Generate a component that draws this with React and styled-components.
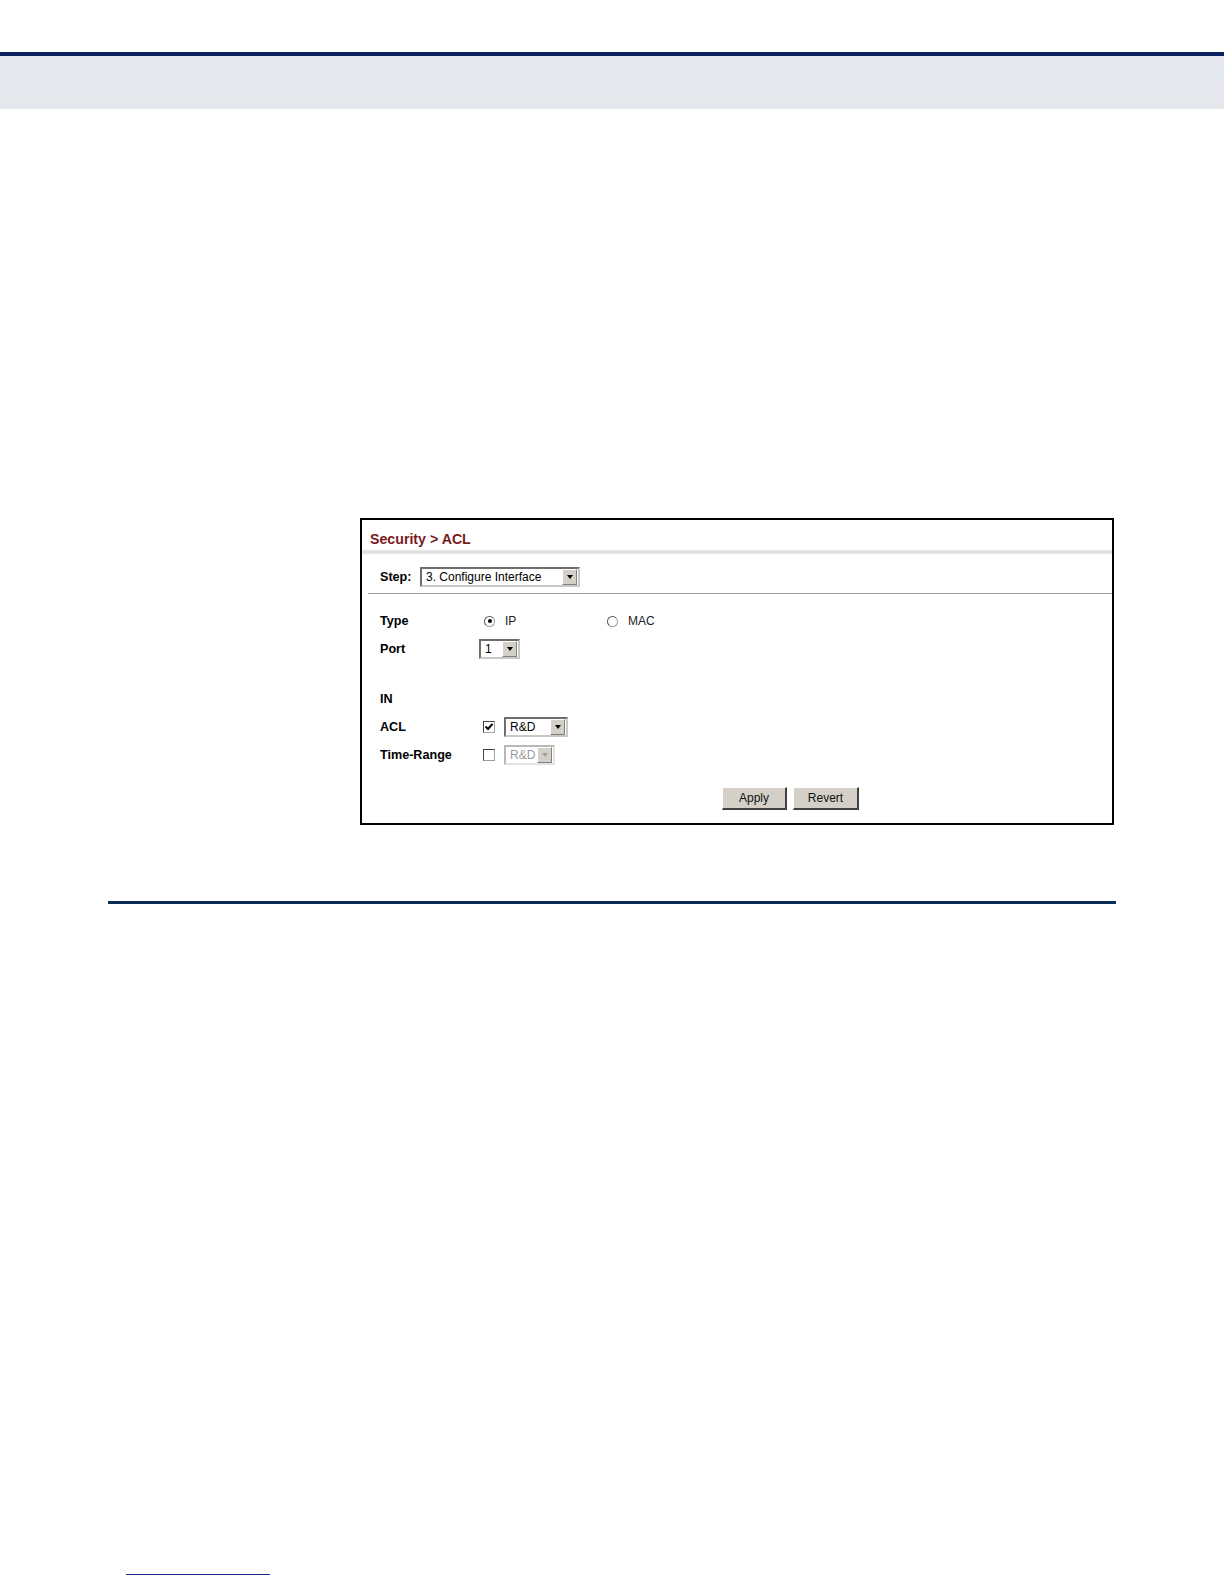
import React from "react";
import styled, { createGlobalStyle, css } from "styled-components";

const GlobalStyle = createGlobalStyle`
  html, body {
    margin: 0;
    padding: 0;
    background: #ffffff;
  }
  body {
    font-family: "Liberation Sans", Arial, sans-serif;
    color: #000;
  }
`;

const Page = styled.div`
  width: 1224px;
  min-height: 1584px;
  padding-top: 52px;
  box-sizing: border-box;
  display: flex;
  flex-direction: column;
`;

const TopRule = styled.div`
  height: 4px;
  background: #0b2262;
`;

const HeaderBand = styled.div`
  height: 53px;
  background: linear-gradient(#e5e8f1, #e4e8ec);
`;

const Figure = styled.div`
  margin: 409px 0 0 360px;
  width: 754px;
  height: 307px;
  box-sizing: border-box;
  border: 2px solid #000;
  display: flex;
  flex-direction: column;
`;

const Title = styled.div`
  height: 29px;
  box-sizing: border-box;
  padding: 11px 0 0 8px;
  line-height: 16px;
  font-size: 14.2px;
  font-weight: bold;
  color: #7a1a1e;
`;

const Shade = styled.div`
  height: 6px;
  background: linear-gradient(#ffffff, #d6d6d6 50%, #ffffff);
`;

const StepRow = styled.div`
  height: 38px;
  padding: 5px 0 0 18px;
  box-sizing: border-box;
  display: flex;
  align-items: center;
  gap: 10px;
`;

const Divider = styled.div`
  height: 1px;
  margin-left: 6px;
  background: #a0a0a0;
`;

const Form = styled.div`
  padding: 13px 0 0 18px;
  display: flex;
  flex-direction: column;
`;

const Row = styled.div`
  height: 28px;
  display: flex;
  align-items: center;
  margin-top: ${(p) => p.$gap || 0}px;
`;

const Label = styled.span`
  width: ${(p) => p.$w || 101}px;
  flex: none;
  font-size: 12.6px;
  font-weight: bold;
`;

const Option = styled.span`
  width: ${(p) => p.$w || "auto"};
  display: flex;
  align-items: center;
  gap: 10px;
  font-size: 12px;
  color: #222;
`;

const Radio = styled.span`
  width: 11px;
  height: 11px;
  flex: none;
  box-sizing: border-box;
  border-radius: 50%;
  border: 1px solid #a0a0a0;
  border-top-color: #555;
  border-left-color: #555;
  background: #fff;
  display: flex;
  align-items: center;
  justify-content: center;
  margin-left: ${(p) => p.$ml || 0}px;
  &::after {
    content: "";
    width: 4px;
    height: 4px;
    border-radius: 50%;
    background: ${(p) => (p.$on ? "#000" : "transparent")};
  }
`;

const Box = styled.span`
  width: 12px;
  height: 12px;
  flex: none;
  box-sizing: border-box;
  border: 1px solid #a0a0a0;
  border-top-color: #444;
  border-left-color: #444;
  background: #fff;
  display: flex;
  align-items: center;
  justify-content: center;
  margin: 0 9px 0 2px;
`;

const Select = styled.span`
  width: ${(p) => p.$w}px;
  height: 20px;
  box-sizing: border-box;
  display: flex;
  align-items: center;
  border: 2px solid #c8c8c8;
  border-top-color: #6e6e6e;
  border-left-color: #6e6e6e;
  background: #fff;
  font-size: 12px;
  color: ${(p) => (p.$off ? "#9a9a9a" : "#000")};
  ${(p) =>
    p.$off &&
    css`
      border-top-color: #b8b8b8;
      border-left-color: #b8b8b8;
      border-bottom-color: #e2e2e2;
      border-right-color: #e2e2e2;
    `}
`;

const SelectText = styled.span`
  flex: 1;
  padding-left: 4px;
  white-space: nowrap;
`;

const Arrow = styled.span`
  width: 15px;
  height: 100%;
  margin-right: 1px;
  box-sizing: border-box;
  background: #d4d0c8;
  border: 1px solid #fff;
  border-right-color: #808080;
  border-bottom-color: #808080;
  display: flex;
  align-items: center;
  justify-content: center;
  &::after {
    content: "";
    border-left: 3.5px solid transparent;
    border-right: 3.5px solid transparent;
    border-top: 4px solid ${(p) => (p.$off ? "#a0a0a0" : "#000")};
  }
`;

const Buttons = styled.div`
  margin-top: 18px;
  padding-left: 342px;
  display: flex;
  gap: 6px;
`;

const Button = styled.span`
  width: ${(p) => p.$w}px;
  height: 23px;
  box-sizing: border-box;
  background: #d4d0c8;
  border: 1px solid #fff;
  border-right: 2px solid #404040;
  border-bottom: 2px solid #404040;
  display: flex;
  align-items: center;
  justify-content: center;
  font-size: 12px;
  color: #111;
`;

const BottomRule = styled.div`
  margin: 76px 0 0 108px;
  width: 1008px;
  height: 3px;
  background: #0b2a55;
`;

const FootRule = styled.div`
  margin: 670px 0 0 126px;
  width: 144px;
  height: 1px;
  background: #1a2a8a;
`;

const Check = () => (
  <svg width="10" height="10" viewBox="0 0 10 10">
    <path d="M1.5 4.5 L4 7 L8.5 1.8" fill="none" stroke="#000" strokeWidth="2" />
  </svg>
);

const Dropdown = ({ w, text, off }) => (
  <Select $w={w} $off={off}>
    <SelectText>{text}</SelectText>
    <Arrow $off={off} />
  </Select>
);

export default function App() {
  return (
    <>
      <GlobalStyle />
      <Page>
        <TopRule />
        <HeaderBand />
        <Figure>
          <Title>Security &gt; ACL</Title>
          <Shade />
          <StepRow>
            <Label $w={30}>Step:</Label>
            <Dropdown w={160} text="3. Configure Interface" />
          </StepRow>
          <Divider />
          <Form>
            <Row>
              <Label>Type</Label>
              <Option $w="126px">
                <Radio $on $ml={3} />
                IP
              </Option>
              <Option>
                <Radio />
                MAC
              </Option>
            </Row>
            <Row>
              <Label $w={99}>Port</Label>
              <Dropdown w={41} text="1" />
            </Row>
            <Row $gap={22}>
              <Label>IN</Label>
            </Row>
            <Row>
              <Label>ACL</Label>
              <Box>
                <Check />
              </Box>
              <Dropdown w={64} text="R&D" />
            </Row>
            <Row>
              <Label>Time-Range</Label>
              <Box />
              <Dropdown w={51} text="R&D" off />
            </Row>
            <Buttons>
              <Button $w={65}>Apply</Button>
              <Button $w={66}>Revert</Button>
            </Buttons>
          </Form>
        </Figure>
        <BottomRule />
        <FootRule />
      </Page>
    </>
  );
}
